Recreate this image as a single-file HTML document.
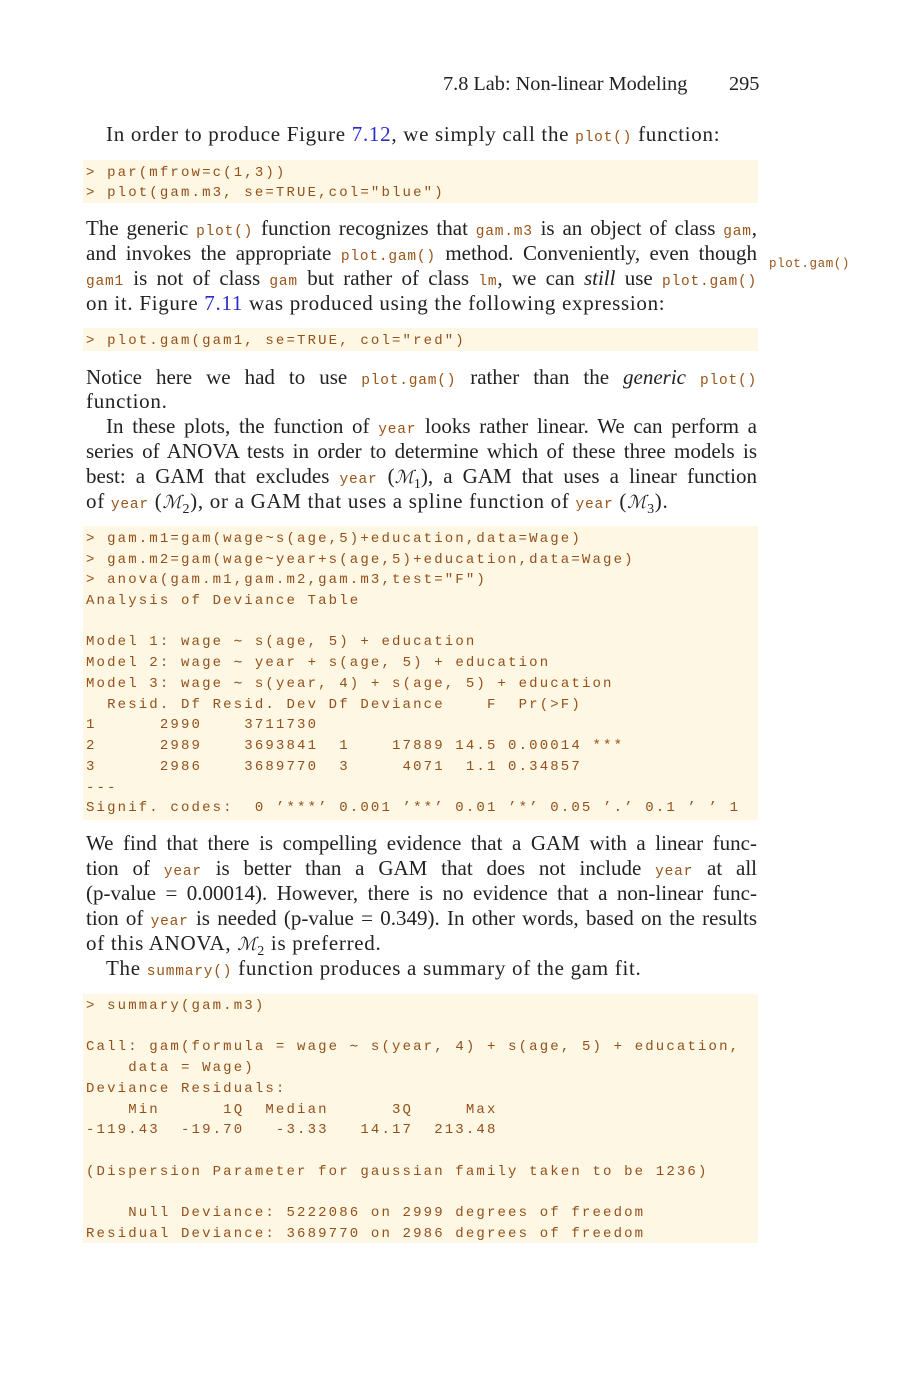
<!DOCTYPE html>
<html><head><meta charset="utf-8"><style>
body{margin:0;background:#fff;width:915px;height:1388px;position:relative;overflow:hidden;font-family:"Liberation Serif",serif;color:#222;}
.l{position:absolute;left:86px;width:671px;height:24px;line-height:24px;font-size:21px;letter-spacing:0.7px;white-space:nowrap;}
.j{text-align:justify;text-align-last:justify;white-space:normal;letter-spacing:0;}
.c{font-family:"Liberation Mono",monospace;font-size:14.5px;letter-spacing:0.8px;color:#9a5418;}
.bg{position:absolute;left:83px;width:675px;background:#fdf7e4;}
.k{position:absolute;left:86px;height:20px;line-height:20px;font-family:"Liberation Mono",monospace;font-size:14px;letter-spacing:2.15px;color:#94501a;white-space:pre;}
.b{color:#2a2ad0}
sub{font-size:14px;line-height:0}
.m{font-style:italic;font-family:"DejaVu Serif",serif;font-size:18px}
</style></head><body>
<div class="l" style="top:72px;left:443px;width:320px;letter-spacing:0;font-size:20.3px">7.8 Lab: Non-linear Modeling<span style="position:absolute;left:286px">295</span></div>

<div class="l" style="top:122px;left:106px;width:640px">In order to produce Figure <span class="b">7.12</span>, we simply call the <span class="c">plot()</span> function:</div>

<div class="bg" style="top:160px;height:43px"></div>
<div class="k" style="top:163px">&gt; par(mfrow=c(1,3))</div>
<div class="k" style="top:183px">&gt; plot(gam.m3, se=TRUE,col="blue")</div>

<div class="l j" style="top:216px">The generic <span class="c">plot()</span> function recognizes that <span class="c">gam.m3</span> is an object of class <span class="c">gam</span>,</div>
<div class="l j" style="top:241px">and invokes the appropriate <span class="c">plot.gam()</span> method. Conveniently, even though</div>
<div class="l j" style="top:266px"><span class="c">gam1</span> is not of class <span class="c">gam</span> but rather of class <span class="c">lm</span>, we can <i>still</i> use <span class="c">plot.gam()</span></div>
<div class="l" style="top:291px">on it. Figure <span class="b">7.11</span> was produced using the following expression:</div>
<div class="c" style="position:absolute;left:769px;top:257px;font-size:12.5px;letter-spacing:0.6px">plot.gam()</div>

<div class="bg" style="top:328px;height:23px"></div>
<div class="k" style="top:331px">&gt; plot.gam(gam1, se=TRUE, col="red")</div>

<div class="l j" style="top:365px">Notice here we had to use <span class="c">plot.gam()</span> rather than the <i>generic</i> <span class="c">plot()</span></div>
<div class="l" style="top:389px">function.</div>
<div class="l j" style="top:414px;left:106px;width:651px">In these plots, the function of <span class="c">year</span> looks rather linear. We can perform a</div>
<div class="l j" style="top:439px">series of ANOVA tests in order to determine which of these three models is</div>
<div class="l j" style="top:464px">best: a GAM that excludes <span class="c">year</span> (<span class="m">ℳ</span><sub>1</sub>), a GAM that uses a linear function</div>
<div class="l" style="top:489px">of <span class="c">year</span> (<span class="m">ℳ</span><sub>2</sub>), or a GAM that uses a spline function of <span class="c">year</span> (<span class="m">ℳ</span><sub>3</sub>).</div>

<div class="bg" style="top:526px;height:294px"></div>
<div class="k" style="top:529px">&gt; gam.m1=gam(wage~s(age,5)+education,data=Wage)</div>
<div class="k" style="top:550px">&gt; gam.m2=gam(wage~year+s(age,5)+education,data=Wage)</div>
<div class="k" style="top:570px">&gt; anova(gam.m1,gam.m2,gam.m3,test="F")</div>
<div class="k" style="top:591px">Analysis of Deviance Table</div>
<div class="k" style="top:632px">Model 1: wage ∼ s(age, 5) + education</div>
<div class="k" style="top:653px">Model 2: wage ∼ year + s(age, 5) + education</div>
<div class="k" style="top:674px">Model 3: wage ∼ s(year, 4) + s(age, 5) + education</div>
<div class="k" style="top:695px">  Resid. Df Resid. Dev Df Deviance    F  Pr(&gt;F)</div>
<div class="k" style="top:715px">1      2990    3711730</div>
<div class="k" style="top:736px">2      2989    3693841  1    17889 14.5 0.00014 ***</div>
<div class="k" style="top:757px">3      2986    3689770  3     4071  1.1 0.34857</div>
<div class="k" style="top:778px">---</div>
<div class="k" style="top:798px">Signif. codes:  0 ’***’ 0.001 ’**’ 0.01 ’*’ 0.05 ’.’ 0.1 ’ ’ 1</div>

<div class="l j" style="top:831px">We find that there is compelling evidence that a GAM with a linear func-</div>
<div class="l j" style="top:856px">tion of <span class="c">year</span> is better than a GAM that does not include <span class="c">year</span> at all</div>
<div class="l j" style="top:881px">(p-value = 0.00014). However, there is no evidence that a non-linear func-</div>
<div class="l j" style="top:906px">tion of <span class="c">year</span> is needed (p-value = 0.349). In other words, based on the results</div>
<div class="l" style="top:931px">of this ANOVA, <span class="m">ℳ</span><sub>2</sub> is preferred.</div>
<div class="l" style="top:956px;left:106px">The <span class="c">summary()</span> function produces a summary of the gam fit.</div>

<div class="bg" style="top:994px;height:249px"></div>
<div class="k" style="top:996px">&gt; summary(gam.m3)</div>
<div class="k" style="top:1037px">Call: gam(formula = wage ∼ s(year, 4) + s(age, 5) + education,</div>
<div class="k" style="top:1058px">    data = Wage)</div>
<div class="k" style="top:1079px">Deviance Residuals:</div>
<div class="k" style="top:1100px">    Min      1Q  Median      3Q     Max</div>
<div class="k" style="top:1120px">-119.43  -19.70   -3.33   14.17  213.48</div>
<div class="k" style="top:1162px">(Dispersion Parameter for gaussian family taken to be 1236)</div>
<div class="k" style="top:1203px">    Null Deviance: 5222086 on 2999 degrees of freedom</div>
<div class="k" style="top:1224px">Residual Deviance: 3689770 on 2986 degrees of freedom</div>
</body></html>
